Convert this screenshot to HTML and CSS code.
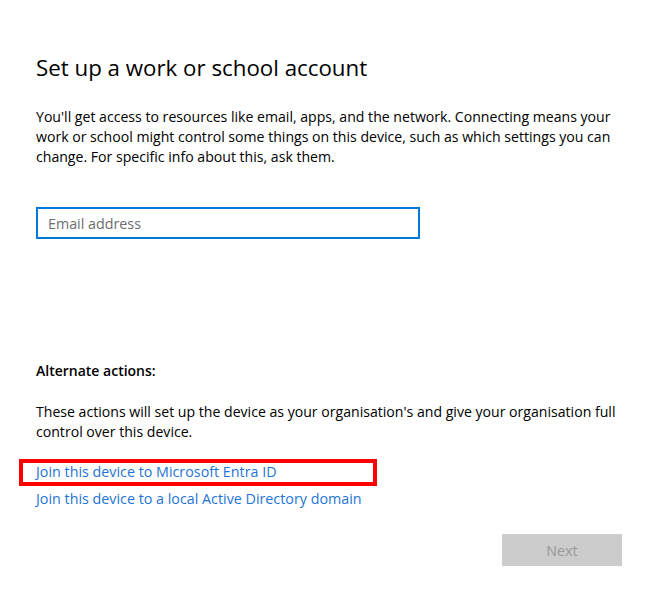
FILE: index.html
```html
<!DOCTYPE html>
<html lang="en">
<head>
<meta charset="utf-8">
<title>Set up a work or school account</title>
<link rel="stylesheet" href="styles.css">
</head>
<body>
<main class="page">
  <h1 class="title">Set up a work or school account</h1>
  <p class="intro">You'll get access to resources like email, apps, and the network. Connecting means your<br>work or school might control some things on this device, such as which settings you can<br>change. For specific info about this, ask them.</p>
  <input class="email" type="text" placeholder="Email address">
  <h2 class="alt-heading">Alternate actions:</h2>
  <p class="alt-desc">These actions will set up the device as your organisation's and give your organisation full<br>control over this device.</p>
  <div class="link-row highlighted">
    <a class="link" href="#">Join this device to Microsoft Entra ID</a>
    <span class="highlight-box"></span>
  </div>
  <div class="link-row second">
    <a class="link" href="#">Join this device to a local Active Directory domain</a>
  </div>
  <div class="actions">
    <button class="next" type="button" disabled>Next</button>
  </div>
</main>
</body>
</html>
```

FILE: styles.css
```css
html, body {
  margin: 0;
  padding: 0;
  background: #ffffff;
}

body {
  font-family: "Open Sans", "Noto Sans", "Liberation Sans", sans-serif;
  color: #000000;
}

.page {
  width: 658px;
  box-sizing: border-box;
  padding: 52px 36px 0 36px;
}

.title {
  margin: 0;
  font-size: 22.3px;
  line-height: 32px;
  font-weight: 400;
  color: #000;
  white-space: nowrap;
}

.intro {
  margin: 23px 0 0 0;
  font-size: 14.1px;
  line-height: 20px;
  white-space: nowrap;
}

.email {
  display: block;
  margin-top: 40px;
  width: 384px;
  height: 32px;
  box-sizing: border-box;
  border: 2px solid #0078d7;
  padding: 0 10px;
  font-family: inherit;
  font-size: 14.3px;
  color: #000;
  outline: none;
}

.email::placeholder {
  color: #6d6d6d;
}

.alt-heading {
  margin: 122px 0 0 0;
  font-size: 14px;
  line-height: 20px;
  font-weight: 600;
}

.alt-desc {
  margin: 21px 0 0 0;
  font-size: 14.1px;
  line-height: 20px;
  white-space: nowrap;
}

.link-row {
  position: relative;
  margin-top: 20px;
  line-height: 20px;
  font-size: 14.3px;
  white-space: nowrap;
}

.link-row.second {
  margin-top: 7px;
}

.link {
  color: #1f74d4;
  text-decoration: none;
}

.highlight-box {
  position: absolute;
  left: -17px;
  top: -3px;
  width: 358px;
  height: 27px;
  box-sizing: border-box;
  border: 4px solid #ff0000;
}

.actions {
  display: flex;
  justify-content: flex-end;
  margin-top: 25px;
}

.next {
  width: 120px;
  height: 32px;
  border: none;
  background: #cccccc;
  color: #999999;
  font-family: inherit;
  font-size: 14.3px;
  padding: 0;
}
```
